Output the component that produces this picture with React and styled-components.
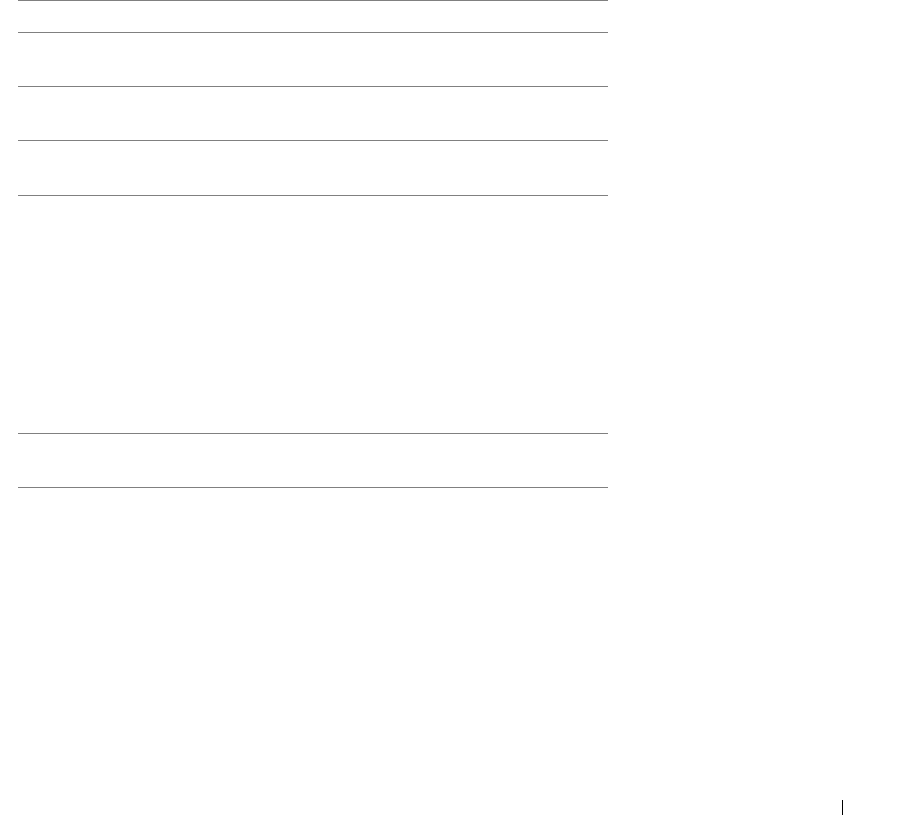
import React from "react";
import styled, { createGlobalStyle } from "styled-components";

const GlobalStyle = createGlobalStyle`
  html, body {
    margin: 0;
    padding: 0;
    background: #ffffff;
    font-family: "Liberation Sans", Arial, sans-serif;
  }
`;

const Page = styled.div`
  min-height: 815px;
  display: flex;
  flex-direction: column;
  box-sizing: border-box;
`;

const Table = styled.div`
  margin-left: 18px;
  width: 590px;
  display: flex;
  flex-direction: column;
  border-bottom: 1px solid #808080;
`;

const Row = styled.div`
  box-sizing: border-box;
  height: ${(p) => p.$h}px;
  border-top: 1px solid #808080;
  display: flex;
  align-items: center;
`;

const Footer = styled.div`
  margin-top: auto;
  display: flex;
  justify-content: flex-end;
  padding-right: 57px;
`;

const Divider = styled.div`
  width: 1px;
  height: 15px;
  background: #000000;
`;

const rows = [32, 54, 54, 55, 238, 54];

export default function App() {
  return (
    <Page>
      <GlobalStyle />
      <Table>
        {rows.map((h, i) => (
          <Row key={i} $h={h} />
        ))}
      </Table>
      <Footer>
        <Divider />
      </Footer>
    </Page>
  );
}
